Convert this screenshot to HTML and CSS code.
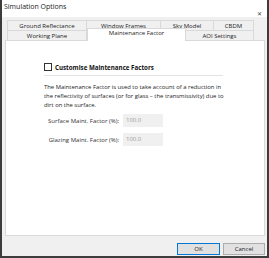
FILE: index.html
```html
<!DOCTYPE html>
<html>
<head>
<meta charset="utf-8">
<link rel="stylesheet" href="styles.css">
</head>
<body>
<div class="window">
  <div class="titlebar">
    <span class="title">Simulation Options</span>
    <span class="close">✕</span>
  </div>
  <div class="client">
    <div class="tabs">
      <div class="row row-back">
        <div class="tab t-ground">Ground Reflectance</div>
        <div class="tab t-window">Window Frames</div>
        <div class="tab t-sky">Sky Model</div>
        <div class="tab t-cbdm">CBDM</div>
      </div>
      <div class="row row-front">
        <div class="tab t-working">Working Plane</div>
        <div class="tab t-maint active">Maintenance Factor</div>
        <div class="tab t-aoi">AOI Settings</div>
      </div>
    </div>
    <div class="page">
      <div class="content">
        <label class="check-row">
          <span class="checkbox"></span>
          <span class="check-label">Customise Maintenance Factors</span>
        </label>
        <div class="rule"></div>
        <p class="desc">The Maintenance Factor is used to take account of a reduction in the reflectivity of surfaces (or for glass – the transmissivity) due to dirt on the surface.</p>
        <div class="field field-1">
          <span class="field-label">Surface Maint. Factor (%):</span>
          <span class="input">100.0</span>
        </div>
        <div class="field field-2">
          <span class="field-label">Glazing Maint. Factor (%):</span>
          <span class="input">100.0</span>
        </div>
      </div>
    </div>
    <div class="footer">
      <button class="btn btn-ok">OK</button>
      <button class="btn btn-cancel">Cancel</button>
    </div>
  </div>
</div>
</body>
</html>
```
FILE: styles.css
```css
* { box-sizing: border-box; }
html, body { margin: 0; padding: 0; }
body {
  width: 269px;
  height: 258px;
  background: #fff;
  font-family: "Open Sans", "Noto Sans", sans-serif;
  font-size: 6px;
  color: #1a1a1a;
  overflow: hidden;
}
.window {
  width: 269px;
  height: 258px;
  border-left: 2px solid #3c3c3c;
  border-right: 2px solid #3c3c3c;
  border-bottom: 2px solid #3c3c3c;
  display: flex;
  flex-direction: column;
}
.titlebar {
  height: 17px;
  background: #fff;
  position: relative;
  padding-left: 2px;
}
.title {
  display: block;
  font-size: 7px;
  line-height: 14px;
  color: #222;
}
.close {
  position: absolute;
  right: 5px;
  top: 10px;
  font-size: 6px;
  line-height: 8px;
  color: #444;
}
.client {
  flex: 1;
  background: #f0f0f0;
  display: flex;
  flex-direction: column;
  padding: 3px 2px 0 3px;
}
.tabs {
  display: flex;
  flex-direction: column;
  padding-left: 2px;
}
.row {
  display: flex;
  height: 10px;
}
.tab {
  text-align: center;
  font-size: 6px;
  line-height: 10px;
  background: #f0f0f0;
  border: 1px solid #d9d9d9;
  border-bottom: none;
  color: #222;
  white-space: nowrap;
}
.tab + .tab { border-left: none; }
.t-ground { width: 80px; }
.t-window { width: 74px; }
.t-sky { width: 53px; }
.t-cbdm { width: 40px; }
.t-working { width: 80px; }
.t-maint { width: 99px; }
.t-aoi { width: 68px; }
.tab.active {
  background: #fff;
  border: 1px solid #d9d9d9;
  border-bottom: none;
  margin-top: -2px;
  height: 13px;
  line-height: 9px;
  position: relative;
  z-index: 1;
}
.page {
  height: 196px;
  background: #fff;
  border: 1px solid #d9d9d9;
}
.content {
  padding: 21px 0 0 38px;
}
.check-row {
  display: flex;
  align-items: center;
  gap: 3px;
  height: 10px;
}
.checkbox {
  width: 8px;
  height: 8px;
  border: 1px solid #333;
  background: #fff;
  flex: none;
}
.check-label {
  font-weight: bold;
  font-size: 6.2px;
  color: #111;
}
.rule {
  height: 1px;
  background: #e3e3e3;
  margin-top: 3px;
  width: 179px;
}
.desc {
  margin: 7px 0 0 0;
  font-size: 5.9px;
  line-height: 9px;
  width: 186px;
  color: #222;
}
.field {
  display: flex;
  align-items: center;
  height: 13px;
}
.field-1 { margin-top: 4px; }
.field-2 { margin-top: 6px; }
.field-label {
  width: 79px;
  text-align: right;
  padding-right: 4px;
  color: #333;
}
.input {
  width: 40px;
  height: 13px;
  background: #f0f0f0;
  color: #9a9a9a;
  padding-left: 3px;
  line-height: 13px;
}
.footer {
  flex: 1;
  display: flex;
  justify-content: flex-end;
  align-items: flex-start;
  gap: 3px;
  padding: 7px 0 0 0;
}
.btn {
  width: 43px;
  height: 12px;
  font-family: inherit;
  font-size: 6px;
  background: #e1e1e1;
  border: 1px solid #adadad;
  color: #222;
  padding: 0;
  line-height: 10px;
}
.btn-cancel { width: 42px; }
.btn-ok {
  border-color: #0078d7;
}
```
